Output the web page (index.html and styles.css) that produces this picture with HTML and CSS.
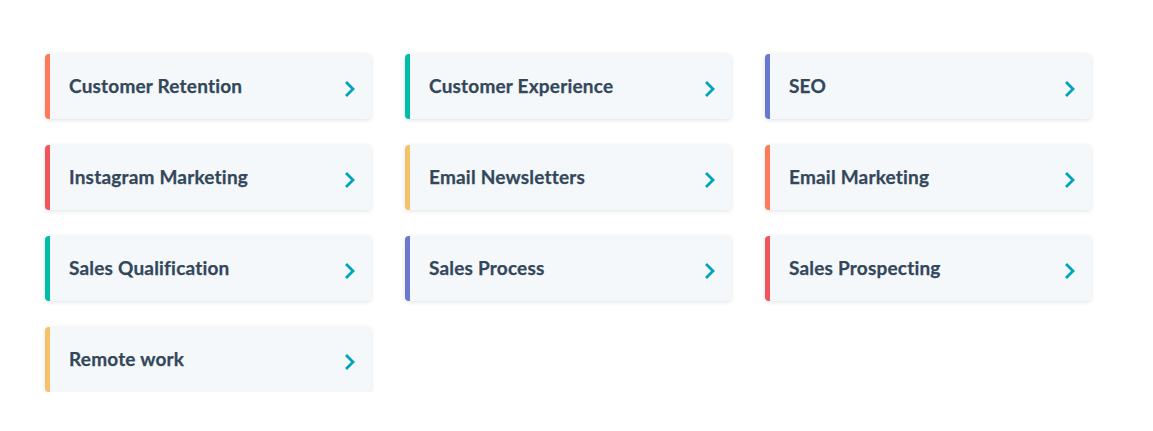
FILE: index.html
```html
<!DOCTYPE html>
<html>
<head>
<meta charset="utf-8">
<link rel="stylesheet" href="styles.css">
</head>
<body>
<div class="grid">
  <a class="card c-orange"><span class="label">Customer Retention</span><svg class="chev" viewBox="0 0 10 16"><path d="M2 2 L8 8 L2 14"/></svg></a>
  <a class="card c-teal"><span class="label">Customer Experience</span><svg class="chev" viewBox="0 0 10 16"><path d="M2 2 L8 8 L2 14"/></svg></a>
  <a class="card c-purple"><span class="label">SEO</span><svg class="chev" viewBox="0 0 10 16"><path d="M2 2 L8 8 L2 14"/></svg></a>
  <a class="card c-red"><span class="label">Instagram Marketing</span><svg class="chev" viewBox="0 0 10 16"><path d="M2 2 L8 8 L2 14"/></svg></a>
  <a class="card c-yellow"><span class="label">Email Newsletters</span><svg class="chev" viewBox="0 0 10 16"><path d="M2 2 L8 8 L2 14"/></svg></a>
  <a class="card c-orange"><span class="label">Email Marketing</span><svg class="chev" viewBox="0 0 10 16"><path d="M2 2 L8 8 L2 14"/></svg></a>
  <a class="card c-teal"><span class="label">Sales Qualification</span><svg class="chev" viewBox="0 0 10 16"><path d="M2 2 L8 8 L2 14"/></svg></a>
  <a class="card c-purple"><span class="label">Sales Process</span><svg class="chev" viewBox="0 0 10 16"><path d="M2 2 L8 8 L2 14"/></svg></a>
  <a class="card c-red"><span class="label">Sales Prospecting</span><svg class="chev" viewBox="0 0 10 16"><path d="M2 2 L8 8 L2 14"/></svg></a>
  <a class="card c-yellow"><span class="label">Remote work</span><svg class="chev" viewBox="0 0 10 16"><path d="M2 2 L8 8 L2 14"/></svg></a>
</div>
</body>
</html>
```
FILE: styles.css
```css
html, body {
  margin: 0;
  padding: 0;
  background: #ffffff;
}
.grid {
  display: grid;
  grid-template-columns: repeat(3, 326px);
  column-gap: 34px;
  row-gap: 26px;
  padding: 54px 0 0 45px;
}
.card {
  display: flex;
  align-items: center;
  justify-content: space-between;
  height: 65px;
  box-sizing: border-box;
  background: #f5f8fa;
  border-left: 5px solid #ff7a59;
  border-radius: 4px;
  box-shadow: 0 1px 4px rgba(45, 62, 80, 0.16);
  padding: 0 16px 0 19px;
  text-decoration: none;
}
.label {
  font-family: Lato, "Noto Sans", sans-serif;
  font-weight: 700;
  font-size: 19px;
  letter-spacing: 0.2px;
  color: #33475b;
  margin-top: -3px;
  -webkit-text-stroke: 0.25px #33475b;
}
.chev {
  width: 10px;
  height: 16px;
  margin-top: 4px;
}
.chev path {
  fill: none;
  stroke: #00a4bd;
  stroke-width: 2.8;
  stroke-linecap: square;
}
.c-orange { border-left-color: #ff7a59; }
.c-teal { border-left-color: #00bda5; }
.c-purple { border-left-color: #6a78d1; }
.c-red { border-left-color: #f2545b; }
.c-yellow { border-left-color: #f5c26b; }
```
